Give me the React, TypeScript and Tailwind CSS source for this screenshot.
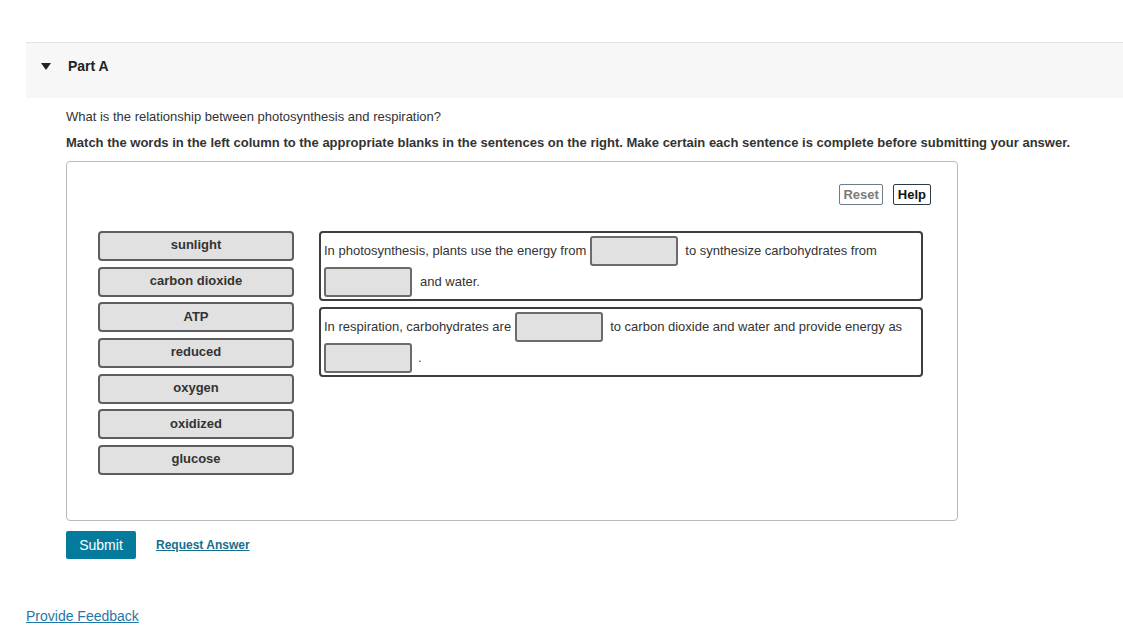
const words = ["sunlight", "carbon dioxide", "ATP", "reduced", "oxygen", "oxidized", "glucose"];

function Blank({ className = "" }: { className?: string }) {
  return <div className={`h-[30px] w-[88px] shrink-0 rounded-[3px] border-2 border-[#6b6b6b] bg-[#e1e1e1] ${className}`} />;
}

function Sentence({ children }: { children: React.ReactNode }) {
  return (
    <div className="flex flex-wrap items-center gap-y-[1px] rounded-[4px] border-2 border-[#3a3f44] px-[3px] pt-[3px] pb-[2px] text-[13px] leading-[16px] text-[#333]">
      {children}
    </div>
  );
}

export default function App() {
  return (
    <div className="min-h-[635px] bg-white pl-[26px] pt-[42px] text-[#333]" style={{ fontFamily: '"Liberation Sans", Arial, sans-serif' }}>
      <div className="flex h-[56px] items-start border-t border-[#e2e2e2] bg-[#f7f7f7] pt-[15px]">
        <svg width="10" height="7" viewBox="0 0 10 7" className="ml-[15px] mt-[5px]">
          <path d="M0 0 L10 0 L5 7 Z" fill="#222" />
        </svg>
        <span className="ml-[17px] text-[14px] font-bold leading-[16px] text-[#222]">Part A</span>
      </div>

      <div className="pl-[40px]">
        <p className="mt-[11px] text-[13px] leading-[15px]">What is the relationship between photosynthesis and respiration?</p>
        <p className="mt-[11px] text-[13px] font-bold leading-[15px]">
          Match the words in the left column to the appropriate blanks in the sentences on the right. Make certain each sentence is complete before submitting your answer.
        </p>

        <div className="mt-[11px] h-[360px] w-[892px] rounded-[4px] border border-[#b9b9b9]">
          <div className="flex justify-end gap-[10px] pr-[26px] pt-[22px]">
            <button className="h-[21px] rounded-[2px] border border-[#6f7c86] px-[3px] text-[13px] font-bold leading-none text-[#7a7a7a]">Reset</button>
            <button className="h-[21px] rounded-[2px] border border-[#2c3a44] px-[4px] text-[13px] font-bold leading-none text-[#111]">Help</button>
          </div>
          <div className="mt-[26px] flex pl-[31px]">
            <div className="flex w-[196px] flex-col gap-[5.7px]">
              {words.map((w) => (
                <div key={w} className="flex h-[30px] items-center justify-center rounded-[4px] border-2 border-[#5d5d62] bg-[#e1e1e1] pb-[2px] text-[13px] font-bold text-[#333]">
                  {w}
                </div>
              ))}
            </div>
            <div className="ml-[25px] flex w-[604px] flex-col gap-[6px]">
              <Sentence>
                <span>In photosynthesis, plants use the energy from</span>
                <Blank className="ml-[4px]" />
                <span className="ml-[7px]">to synthesize carbohydrates from</span>
                <Blank />
                <span className="ml-[8px]">and water.</span>
              </Sentence>
              <Sentence>
                <span>In respiration, carbohydrates are</span>
                <Blank className="ml-[4px]" />
                <span className="ml-[7px]">to carbon dioxide and water and provide energy as</span>
                <Blank />
                <span className="ml-[6px]">.</span>
              </Sentence>
            </div>
          </div>
        </div>

        <div className="mt-[10px] flex items-center">
          <button className="h-[28px] w-[70px] rounded-[2px] bg-[#047b9c] text-[14px] text-white">Submit</button>
          <a className="ml-[20px] text-[12px] font-bold text-[#146f8f] underline">Request Answer</a>
        </div>
      </div>

      <a className="mt-[47px] block text-[14px] text-[#1f77a8] underline">Provide Feedback</a>
    </div>
  );
}
